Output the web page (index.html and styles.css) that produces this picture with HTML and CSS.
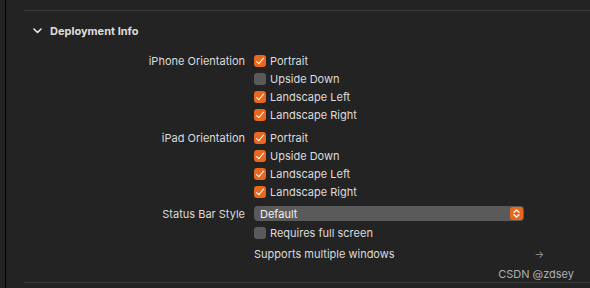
FILE: index.html
```html
<!DOCTYPE html>
<html>
<head>
<meta charset="utf-8">
<link rel="stylesheet" href="styles.css">
</head>
<body>
<div class="app">
  <div class="gutter"></div>
  <div class="divider"></div>
  <main class="pane">
    <div class="rule"></div>
    <div class="section-head">
      <svg class="chev" width="9" height="6" viewBox="0 0 9 6"><path d="M1 1 L4.5 4.5 L8 1" fill="none" stroke="#e6e6e6" stroke-width="1.6" stroke-linecap="round" stroke-linejoin="round"/></svg>
      <span class="title">Deployment Info</span>
    </div>
    <div class="form">
      <div class="label">iPhone Orientation</div>
      <div class="group">
        <div class="check"><span class="box on"></span>Portrait</div>
        <div class="check"><span class="box"></span>Upside Down</div>
        <div class="check"><span class="box on"></span>Landscape Left</div>
        <div class="check"><span class="box on"></span>Landscape Right</div>
      </div>
      <div class="label">iPad Orientation</div>
      <div class="group">
        <div class="check"><span class="box on"></span>Portrait</div>
        <div class="check"><span class="box on"></span>Upside Down</div>
        <div class="check"><span class="box on"></span>Landscape Left</div>
        <div class="check"><span class="box on"></span>Landscape Right</div>
      </div>
      <div class="label label-pop">Status Bar Style</div>
      <div class="group">
        <div class="popup"><span>Default</span><span class="stepper"><svg width="7" height="9" viewBox="0 0 7 9"><path d="M1 3.2 L3.5 1 L6 3.2 M1 5.8 L3.5 8 L6 5.8" fill="none" stroke="#fff" stroke-width="1.3" stroke-linecap="round" stroke-linejoin="round"/></svg></span></div>
        <div class="check"><span class="box"></span>Requires full screen</div>
        <div class="link"><span>Supports multiple windows</span><span class="arrow">→</span></div>
      </div>
    </div>
    <div class="footer">
      <span class="mark">CSDN @zdsey</span>
    </div>
    <div class="rule"></div>
  </main>
</div>
</body>
</html>
```
FILE: styles.css
```css
html, body {
  margin: 0;
  padding: 0;
  background: #232323;
}
body {
  font-family: Inter, "Liberation Sans", sans-serif;
  font-size: 11px;
  color: #dcdcdc;
  width: 590px;
  height: 288px;
  overflow: hidden;
}
.app {
  display: flex;
  height: 288px;
}
.gutter {
  width: 5px;
  background: #232323;
}
.divider {
  width: 1px;
  background: #000;
}
.pane {
  flex: 1;
  padding-left: 18px;
  display: flex;
  flex-direction: column;
}
.rule {
  height: 1px;
  background: #3a3a3a;
}
.pane > .rule:first-child {
  margin-top: 10px;
}
.section-head {
  display: flex;
  align-items: center;
  height: 16px;
  margin-top: 12px;
  padding-left: 9px;
}
.chev {
  margin-right: 8px;
}
.title {
  font-weight: 700;
  color: #dedede;
}
.form {
  display: grid;
  grid-template-columns: 221px auto;
  column-gap: 9px;
  margin-top: 13px;
  row-gap: 5px;
}
.label {
  text-align: right;
  height: 18px;
  line-height: 18px;
}
.label-pop {
  height: 16px;
  line-height: 16px;
}
.group {
  display: flex;
  flex-direction: column;
}
.check {
  display: flex;
  align-items: center;
  height: 18px;
  white-space: nowrap;
}
.box {
  width: 12px;
  height: 12px;
  border-radius: 3px;
  background: #5a5a5a;
  margin-right: 4px;
  flex: none;
  position: relative;
}
.box.on {
  background: #e8681f;
}
.box.on::after {
  content: "";
  position: absolute;
  left: 4px;
  top: 1px;
  width: 3px;
  height: 7px;
  border: solid #fff;
  border-width: 0 1.6px 1.6px 0;
  transform: rotate(40deg);
}
.popup {
  display: flex;
  align-items: center;
  justify-content: space-between;
  width: 270px;
  height: 15px;
  background: #5a5a5a;
  border-radius: 4px;
  padding-left: 6px;
  padding-right: 1px;
  box-sizing: border-box;
  color: #f0f0f0;
  margin-bottom: 3px;
}
.stepper {
  width: 13px;
  height: 13px;
  background: #e8681f;
  border-radius: 3px;
  display: flex;
  align-items: center;
  justify-content: center;
}
.link {
  display: flex;
  align-items: center;
  justify-content: space-between;
  width: 290px;
  height: 20px;
  margin-top: 2px;
}
.arrow {
  color: #9a9a9a;
  font-size: 10px;
}
.footer {
  display: flex;
  justify-content: flex-end;
  padding-right: 16px;
  height: 17px;
  margin-top: 1px;
  align-items: center;
}
.mark {
  color: #b0b0b0;
  font-size: 11px;
}
```
